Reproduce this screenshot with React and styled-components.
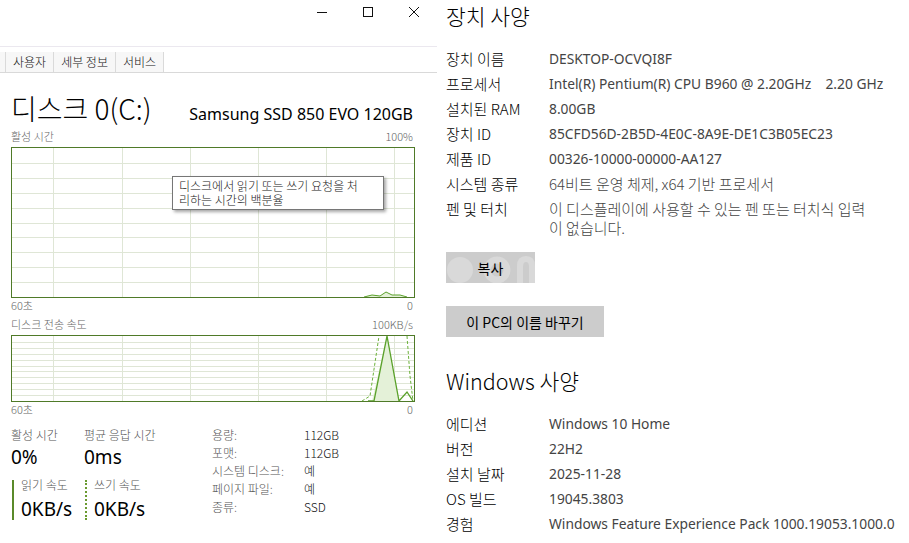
import styled, { createGlobalStyle } from 'styled-components';

const GlobalStyle = createGlobalStyle`
  html, body {
    margin: 0;
    padding: 0;
    background: #fff;
  }
  body {
    font-family: "Noto Sans", "Noto Sans CJK KR", sans-serif;
    color: #000;
    overflow: hidden;
  }
`;

const gridX = [41, 110, 178, 246, 314, 382];

// k: label, v: value, ko: value is mostly Korean text
const deviceSpecs = [
  { k: '장치 이름', v: 'DESKTOP-OCVQI8F' },
  { k: '프로세서', v: 'Intel(R) Pentium(R) CPU B960 @ 2.20GHz\u00a0\u00a0\u00a0 2.20 GHz' },
  { k: '설치된 RAM', v: '8.00GB' },
  { k: '장치 ID', v: '85CFD56D-2B5D-4E0C-8A9E-DE1C3B05EC23' },
  { k: '제품 ID', v: '00326-10000-00000-AA127' },
  { k: '시스템 종류', v: '64비트 운영 체제, x64 기반 프로세서', ko: true },
  { k: '펜 및 터치', v: '이 디스플레이에 사용할 수 있는 펜 또는 터치식 입력\n이 없습니다.', ko: true },
];

const winSpecs = [
  { k: '에디션', v: 'Windows 10 Home' },
  { k: '버전', v: '22H2' },
  { k: '설치 날짜', v: '2025-11-28' },
  { k: 'OS 빌드', v: '19045.3803' },
  { k: '경험', v: 'Windows Feature Experience Pack 1000.19053.1000.0' },
];

const diskInfo = [
  ['용량:', '112GB'],
  ['포맷:', '112GB'],
  ['시스템 디스크:', '예'],
  ['페이지 파일:', '예'],
  ['종류:', 'SSD'],
];

const Chart = ({ height, rows, children }) => (
  <svg width="402" height={height} viewBox={`0 0 402 ${height}`}>
    {gridX.map((x) => (
      <line key={'v' + x} x1={x + 0.5} y1="0" x2={x + 0.5} y2={height} stroke="#dfe6d6" />
    ))}
    {[...Array(rows - 1)].map((_, i) => {
      const y = Math.round(((i + 1) * height) / rows) + 0.5;
      return <line key={'h' + i} x1="0" y1={y} x2="402" y2={y} stroke="#dfe6d6" />;
    })}
    {children}
  </svg>
);

const SpecTable = ({ items }) => (
  <SpecList>
    {items.map((s) => (
      <SpecRow key={s.k}>
        <SpecKey>{s.k}</SpecKey>
        <SpecValue $ko={s.ko}>{s.v}</SpecValue>
      </SpecRow>
    ))}
  </SpecList>
);

const App = () => {
  return (
    <>
      <GlobalStyle />
      <Page>
        <TaskPane>
          <TitleBar>
            <WinButton>
              <svg width="12" height="12" viewBox="0 0 12 12">
                <line x1="1" y1="6.5" x2="11" y2="6.5" stroke="#111" />
              </svg>
            </WinButton>
            <WinButton>
              <svg width="12" height="12" viewBox="0 0 12 12">
                <rect x="1.5" y="1.5" width="9" height="9" fill="none" stroke="#111" />
              </svg>
            </WinButton>
            <WinButton>
              <svg width="12" height="12" viewBox="0 0 12 12">
                <path d="M1 1 L11 11 M11 1 L1 11" stroke="#111" strokeWidth="1" />
              </svg>
            </WinButton>
          </TitleBar>
          <TopLine />
          <TabStrip>
            <Tab $stub />
            <Tab>사용자</Tab>
            <Tab>세부 정보</Tab>
            <Tab>서비스</Tab>
          </TabStrip>

          <Content>
            <Header>
              <DiskTitle>디스크 0(C:)</DiskTitle>
              <DiskModel>Samsung SSD 850 EVO 120GB</DiskModel>
            </Header>

            <AxisRow $top={4}>
              <span>활성 시간</span>
              <span>100%</span>
            </AxisRow>
            <ChartBox>
              <Chart height={149} rows={10}>
                <polygon
                  points="352,149 360,147 368,148 374,144 380,147 388,147 395,149"
                  fill="#e4f1d8"
                />
                <polyline
                  points="352,149 360,147 368,148 374,144 380,147 388,147 395,149"
                  fill="none"
                  stroke="#5aa12a"
                  strokeWidth="1"
                />
              </Chart>
              <Tooltip>
                <div>디스크에서 읽기 또는 쓰기 요청을 처</div>
                <div>리하는 시간의 백분율</div>
              </Tooltip>
            </ChartBox>
            <AxisRow>
              <span>60초</span>
              <span>0</span>
            </AxisRow>

            <AxisRow $top={5}>
              <span>디스크 전송 속도</span>
              <span>100KB/s</span>
            </AxisRow>
            <ChartBox>
              <Chart height={65} rows={11}>
                <polygon points="360,65 375,0 387,65" fill="#e4f1d8" />
                <polyline
                  points="356,65 362,65 375,0 387,65 395,56 401,65"
                  fill="none"
                  stroke="#5aa12a"
                  strokeWidth="1.3"
                />
                <polyline
                  points="350,65 358,60 367,0"
                  fill="none"
                  stroke="#6bb23a"
                  strokeDasharray="3 2"
                />
                <polyline
                  points="395,0 398,40 401,65"
                  fill="none"
                  stroke="#6bb23a"
                  strokeDasharray="3 2"
                />
              </Chart>
            </ChartBox>
            <AxisRow>
              <span>60초</span>
              <span>0</span>
            </AxisRow>

            <Stats>
              <StatGrid>
                <StatLabel>활성 시간</StatLabel>
                <StatLabel>평균 응답 시간</StatLabel>
                <StatValue>0%</StatValue>
                <StatValue>0ms</StatValue>
                <Rate>
                  <StatLabel>읽기 속도</StatLabel>
                  <StatValue>0KB/s</StatValue>
                </Rate>
                <Rate $dotted>
                  <StatLabel>쓰기 속도</StatLabel>
                  <StatValue>0KB/s</StatValue>
                </Rate>
              </StatGrid>
              <InfoGrid>
                {diskInfo.map(([k, v]) => (
                  <InfoRow key={k}>
                    <InfoKey>{k}</InfoKey>
                    <span>{v}</span>
                  </InfoRow>
                ))}
              </InfoGrid>
            </Stats>
          </Content>
        </TaskPane>

        <AboutPane>
          <SectionTitle>장치 사양</SectionTitle>
          <SpecTable items={deviceSpecs} />
          <ActionButton $width={89} $top={12}>
            <Watermark width="89" height="31" viewBox="0 0 89 31">
              <circle cx="14" cy="18" r="13" fill="#d9d9d9" />
              <circle cx="51" cy="18" r="10" fill="none" stroke="#d9d9d9" strokeWidth="7" />
              <path d="M71 31 V14 Q71 4 80 4 Q89 4 89 14 V31 H83 V15 Q83 10 80 10 Q77 10 77 15 V31 Z" fill="#d9d9d9" />
            </Watermark>
            <ButtonText>복사</ButtonText>
          </ActionButton>
          <ActionButton $width={158} $top={23}>
            <ButtonText>이 PC의 이름 바꾸기</ButtonText>
          </ActionButton>

          <SectionTitle $top={29}>Windows 사양</SectionTitle>
          <SpecTable items={winSpecs} />
        </AboutPane>
      </Page>
    </>
  );
};

export default App;

const Page = styled.div`
  display: flex;
  width: 909px;
  height: 543px;
  overflow: hidden;
`;

const TaskPane = styled.div`
  width: 437px;
  flex-shrink: 0;
  display: flex;
  flex-direction: column;
  font-family: "Noto Sans CJK KR", "Noto Sans", sans-serif;
  font-weight: 300;
`;

const TitleBar = styled.div`
  height: 46px;
  display: flex;
  justify-content: flex-end;
`;

const WinButton = styled.div`
  width: 46px;
  height: 24px;
  display: flex;
  align-items: center;
  justify-content: center;
`;

const TopLine = styled.div`
  height: 1px;
  background: #ebe8ef;
`;

const TabStrip = styled.div`
  margin-top: 5px;
  height: 20px;
  display: flex;
  border-bottom: 1px solid #d9d9d9;
`;

const Tab = styled.div`
  width: ${(p) => (p.$stub ? '5px' : 'auto')};
  padding: ${(p) => (p.$stub ? '0' : '0 7px')};
  border-right: 1px solid #dadada;
  background: #f7f7f7;
  font-size: 12px;
  line-height: 20px;
  color: #111;
`;

const Content = styled.div`
  padding: 0 24px 0 11px;
`;

const Header = styled.div`
  margin-top: 18px;
  display: flex;
  justify-content: space-between;
  align-items: baseline;
  height: 34px;
`;

const DiskTitle = styled.div`
  font-size: 28px;
  line-height: 34px;
  color: #000;
`;

const DiskModel = styled.div`
  font-family: "Noto Sans", "Noto Sans CJK KR", sans-serif;
  font-weight: 400;
  font-size: 16px;
  color: #000;
`;

const AxisRow = styled.div`
  margin-top: ${(p) => p.$top || 0}px;
  display: flex;
  justify-content: space-between;
  font-size: 11px;
  line-height: 14px;
  color: #666;
`;

const ChartBox = styled.div`
  position: relative;
  margin-top: 4px;
  width: 402px;
  border: 1px solid #4f7a28;
  svg {
    display: block;
  }
`;

const Tooltip = styled.div`
  position: absolute;
  left: 160px;
  top: 28px;
  width: 198px;
  padding: 2px 6px 2px;
  border: 1px solid #767676;
  background: #fff;
  box-shadow: 2px 2px 3px rgba(0, 0, 0, 0.35);
  font-size: 12px;
  line-height: 14px;
  color: #222;
  white-space: nowrap;
`;

const Stats = styled.div`
  margin-top: 11px;
  display: flex;
  gap: 38px;
`;

const StatGrid = styled.div`
  display: grid;
  grid-template-columns: 73px 90px;
  align-content: start;
`;

const StatLabel = styled.div`
  font-size: 12px;
  line-height: 16px;
  color: #555;
`;

const StatValue = styled.div`
  font-family: "Noto Sans", "Noto Sans CJK KR", sans-serif;
  font-weight: 400;
  font-size: 19px;
  line-height: 28px;
  color: #000;
`;

const Rate = styled.div`
  margin-top: 9px;
  margin-left: 1px;
  padding-left: 7px;
  border-left: 2px ${(p) => (p.$dotted ? 'dotted #6a9a30' : 'solid #5a8a2a')};
  height: 40px;
  display: flex;
  flex-direction: column;
  justify-content: space-between;
  ${StatLabel} {
    line-height: 14px;
    margin-top: -2px;
  }
  ${StatValue} {
    line-height: 22px;
  }
`;

const InfoGrid = styled.div`
  display: flex;
  flex-direction: column;
  margin-top: -1px;
`;

const InfoRow = styled.div`
  display: flex;
  font-size: 12px;
  line-height: 18px;
  color: #111;
`;

const InfoKey = styled.span`
  width: 92px;
  color: #555;
`;

const AboutPane = styled.div`
  flex: 1;
  padding: 1px 0 0 9px;
  font-family: "Noto Sans", "Noto Sans CJK KR", sans-serif;
`;

const SectionTitle = styled.div`
  margin-top: ${(p) => p.$top || 0}px;
  font-family: "Noto Sans CJK KR", sans-serif;
  font-weight: 300;
  font-size: 21.5px;
  line-height: 30px;
  color: #000;
`;

const SpecList = styled.div`
  margin-top: 15px;
  display: flex;
  flex-direction: column;
`;

const SpecRow = styled.div`
  display: grid;
  grid-template-columns: 103px 1fr;
  padding: 3px 0;
  line-height: 19px;
`;

const SpecKey = styled.div`
  font-family: "Noto Sans CJK KR", sans-serif;
  font-weight: 300;
  font-size: 15px;
  color: #000;
`;

const SpecValue = styled.div`
  font-family: ${(p) => (p.$ko ? '"Noto Sans CJK KR", "Noto Sans"' : '"Noto Sans", "Noto Sans CJK KR"')}, sans-serif;
  font-weight: ${(p) => (p.$ko ? 300 : 400)};
  font-size: ${(p) => (p.$ko ? '15px' : '13.8px')};
  color: #444;
  white-space: pre-line;
`;

const ActionButton = styled.div`
  position: relative;
  overflow: hidden;
  margin-top: ${(p) => p.$top}px;
  width: ${(p) => p.$width}px;
  height: 31px;
  background: #cccccc;
  display: flex;
  align-items: center;
  justify-content: center;
`;

const Watermark = styled.svg`
  position: absolute;
  left: 0;
  top: 0;
`;

const ButtonText = styled.span`
  position: relative;
  font-family: "Noto Sans CJK KR", sans-serif;
  font-size: 14px;
  color: #000;
`;
